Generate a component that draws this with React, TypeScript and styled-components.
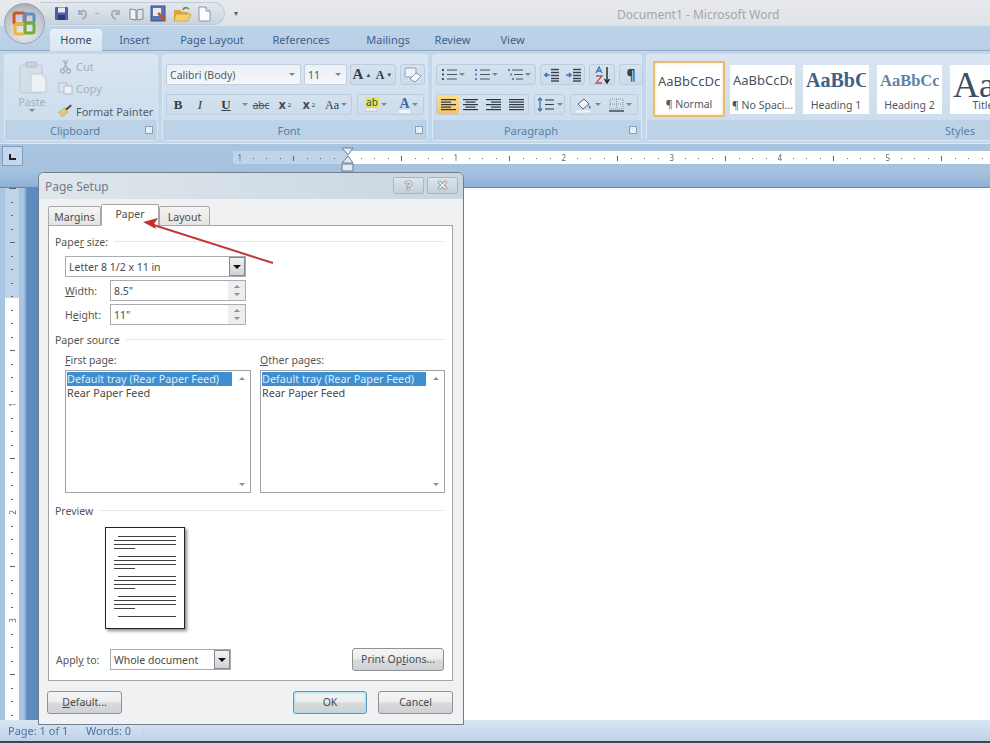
import React from "react";
import styled, { createGlobalStyle, css } from "styled-components";

const GlobalStyle = createGlobalStyle`
  html, body { margin: 0; padding: 0; background: #fff; }
  body { font-family: "Noto Sans", "Open Sans", sans-serif; font-size: 11px; color: #444; }
`;

const Page = styled.div`
  position: relative;
  width: 990px;
  height: 743px;
  overflow: hidden;
  display: flex;
  flex-direction: column;
  filter: blur(0.25px);
`;

/* ---------- title bar ---------- */
const TitleBar = styled.div`
  height: 26px;
  flex: none;
  display: flex;
  align-items: center;
  background: linear-gradient(#e9eaed, #dfe2e6);
`;
const OfficeOrb = styled.div`
  position: absolute;
  left: 4px;
  top: 3px;
  width: 41px;
  height: 41px;
  border-radius: 50%;
  display: flex;
  align-items: center;
  justify-content: center;
  background: radial-gradient(circle at 50% 72%, #eceff1, #b9c0c7 68%, #8b96a0);
  border: 1px solid #98a4b0;
  box-sizing: border-box;
  z-index: 2;
`;
const QuickAccess = styled.div`
  margin-left: 40px;
  width: 185px;
  height: 23px;
  margin-top: 1px;
  box-sizing: border-box;
  padding-left: 14px;
  display: flex;
  align-items: center;
  gap: 6px;
  background: linear-gradient(#e3e8ee, #c8d3de);
  border: 1px solid #c2ccd6;
  border-left: none;
  border-radius: 0 12px 12px 0;
`;
const QatDash = styled.span`
  width: 4px;
  height: 1px;
  margin-right: 4px;
  background: #a3b0bd;
  flex: none;
`;
const QatMore = styled.span`
  margin-left: 9px;
  font-size: 8px;
  color: #56616c;
  line-height: 1;
`;
const WindowTitle = styled.div`
  position: absolute;
  left: 617px;
  top: 6px;
  font-size: 12px;
  color: #a3a6aa;
`;

/* ---------- tabs ---------- */
const TabRow = styled.div`
  height: 25px;
  flex: none;
  box-sizing: border-box;
  padding: 3px 0 0 50px;
  display: flex;
  background: linear-gradient(#bcd3e8, #b8cfe6);
  border-bottom: 1px solid #8fa9c3;
`;
const Tab = styled.div<{ $active?: boolean; $w: number }>`
  width: ${(p) => p.$w}px;
  flex: none;
  text-align: center;
  line-height: 22px;
  color: #3f5f8a;
  ${(p) =>
    p.$active &&
    css`
      background: linear-gradient(#e8eff6, #d9e6f2);
      border-radius: 3px 3px 0 0;
      color: #3a4a5c;
      height: 23px;
    `}
`;

/* ---------- ribbon ---------- */
const Ribbon = styled.div`
  height: 92px;
  flex: none;
  box-sizing: border-box;
  padding: 3px 0 2px 4px;
  display: flex;
  gap: 4px;
  background: #c3d7ea;
  overflow: hidden;
`;
const Group = styled.div<{ $w: number }>`
  width: ${(p) => p.$w}px;
  flex: none;
  display: flex;
  flex-direction: column;
  border: 1px solid #dce7f1;
  border-radius: 3px;
  box-sizing: border-box;
  background: linear-gradient(#d9e5f1, #c9dbec);
`;
const GroupBody = styled.div<{ $pad?: string }>`
  flex: 1;
  min-height: 0;
  padding: ${(p) => p.$pad || "9px 3px 0 3px"};
  display: flex;
`;
const GroupRows = styled.div`
  display: flex;
  flex-direction: column;
  gap: 9px;
`;
const GroupFooter = styled.div`
  height: 20px;
  flex: none;
  display: flex;
  align-items: center;
  background: #bcd2e7;
  color: #5a7ea8;
  padding-right: 4px;
`;
const GroupLabel = styled.div`
  flex: 1;
  text-align: center;
  font-size: 11px;
`;
const Launcher = styled.span`
  width: 6px;
  height: 6px;
  border: 1px solid #8aa0b6;
  background: #e6edf4;
  flex: none;
`;
const PasteColumn = styled.div`
  width: 52px;
  margin-left: -2px;
  display: flex;
  flex-direction: column;
  align-items: center;
  color: #a5afb9;
  font-size: 10.5px;
  margin-top: -3px;
`;
const ClipList = styled.div`
  display: flex;
  flex-direction: column;
  gap: 4.5px;
  margin-top: -7px;
`;
const ClipItem = styled.div<{ $off?: boolean }>`
  height: 18px;
  flex: none;
  display: flex;
  align-items: center;
  gap: 3px;
  white-space: nowrap;
  color: ${(p) => (p.$off ? "#a5afb9" : "#4d5f74")};
`;
const Row = styled.div<{ $gap?: number }>`
  display: flex;
  gap: ${(p) => p.$gap ?? 5}px;
`;
const Combo = styled.div<{ $w: number }>`
  width: ${(p) => p.$w}px;
  height: 21px;
  box-sizing: border-box;
  padding: 0 5px 0 3px;
  display: flex;
  align-items: center;
  justify-content: space-between;
  background: linear-gradient(#eaf0f6, #f4f7fa);
  border: 1px solid #c2d0de;
  border-radius: 2px;
  color: #4d5a68;
  font-size: 10.5px;
`;
const Caret = styled.span`
  width: 0;
  height: 0;
  flex: none;
  border-left: 3px solid transparent;
  border-right: 3px solid transparent;
  border-top: 3px solid #7a8794;
`;
const Cluster = styled.div`
  height: 21px;
  box-sizing: border-box;
  display: flex;
  align-items: stretch;
  background: linear-gradient(#d5e2ef, #cbdcec);
  border: 1px solid #bccddd;
  border-radius: 3px;
`;
const Cell = styled.div<{ $w: number; $on?: boolean }>`
  width: ${(p) => p.$w}px;
  flex: none;
  display: flex;
  align-items: center;
  justify-content: center;
  gap: 2px;
  color: #3d4854;
  font-size: 12px;
  ${(p) =>
    p.$on &&
    css`
      background: linear-gradient(#fbdc95, #f8c262);
      border-radius: 2px;
    `}
`;
const SerifGlyph = styled.span<{ $size?: number; $color?: string; $i?: boolean; $u?: boolean; $b?: boolean }>`
  font-family: "Liberation Serif", serif;
  font-weight: ${(p) => (p.$b === false ? 400 : 700)};
  font-style: ${(p) => (p.$i ? "italic" : "normal")};
  text-decoration: ${(p) => (p.$u ? "underline" : "none")};
  font-size: ${(p) => p.$size ?? 12}px;
  color: ${(p) => p.$color ?? "#333d48"};
  line-height: 1;
`;
const Strike = styled.span`
  font-size: 10px;
  text-decoration: line-through;
  color: #4a5560;
`;
const Sub = styled.sub`
  font-size: 6px;
`;
const Sup = styled.sup`
  font-size: 6px;
`;
const StyleGallery = styled.div`
  display: flex;
  align-items: center;
  margin-left: 1px;
`;
const StyleItem = styled.div<{ $w: number; $active?: boolean; $gap?: number }>`
  width: ${(p) => p.$w}px;
  height: ${(p) => (p.$active ? 56 : 49)}px;
  flex: none;
  margin-right: ${(p) => p.$gap ?? 8}px;
  box-sizing: border-box;
  overflow: hidden;
  display: flex;
  flex-direction: column;
  align-items: center;
  justify-content: space-between;
  padding: 7px 0 2px 0;
  background: #fff;
  white-space: nowrap;
  ${(p) =>
    p.$active &&
    css`
      border: 2px solid #e7bc6a;
      border-radius: 2px;
      box-shadow: inset 0 0 3px #f7dd9e;
      padding: 10px 0 4px 0;
    `}
`;
const StyleSample = styled.div<{ $serif?: boolean; $color?: string; $size?: number }>`
  align-self: stretch;
  margin: 0 3px;
  overflow: hidden;
  font-family: ${(p) => (p.$serif ? '"Liberation Serif", serif' : '"Noto Sans", sans-serif')};
  font-weight: ${(p) => (p.$serif && (p.$size ?? 0) < 24 ? 700 : 400)};
  font-size: ${(p) => p.$size ?? 12}px;
  color: ${(p) => p.$color ?? "#4a535e"};
  line-height: ${(p) => ((p.$size ?? 12) > 24 ? "27px" : "17px")};
`;
const StyleName = styled.div`
  font-size: 10.5px;
  color: #4f5563;
  line-height: 14px;
`;

/* ---------- horizontal ruler ---------- */
const RulerBand = styled.div`
  height: 45px;
  flex: none;
  position: relative;
  box-sizing: border-box;
  padding-top: 7px;
  display: flex;
  align-items: flex-start;
  background: linear-gradient(#a9c4e0 0, #a6c2df 60%, #8fb0d6 97%, #53708f 100%);
  border-top: 1px solid #dce7f1;
`;
const TabStopButton = styled.div`
  position: absolute;
  left: 2px;
  top: 2px;
  width: 21px;
  height: 20px;
  box-sizing: border-box;
  border: 1px solid #7f9dbe;
  background: #c6d7ea;
  display: flex;
  align-items: center;
  justify-content: center;
`;
const RulerCorner = styled.span`
  width: 5px;
  height: 4px;
  margin-top: 1px;
  border-left: 2px solid #222;
  border-bottom: 2px solid #222;
`;
const HStrip = styled.div`
  margin-left: 233px;
  flex: 1;
  height: 13px;
  display: flex;
  overflow: hidden;
  background: linear-gradient(to right, #c0d4e9 115px, #fff 115px);
`;
const HCell = styled.div`
  flex: 0 0 13.5px;
  text-align: center;
  line-height: 13px;
  font-size: 8px;
  color: #5b6670;
`;
const IndentMarker = styled.svg`
  position: absolute;
  left: 341px;
  top: 3px;
`;

/* ---------- main area ---------- */
const Workspace = styled.div`
  flex: 1;
  min-height: 0;
  display: flex;
`;
const VRulerGutter = styled.div`
  width: 38px;
  flex: none;
  display: flex;
  background: linear-gradient(to right, #a9c5e2 0, #a9c5e2 24px, #5d8abf 27px, #5d8abf 100%);
`;
const VRuler = styled.div`
  width: 14px;
  margin-left: 5px;
  overflow: hidden;
  background: linear-gradient(#c0d4e9 110px, #fff 110px);
`;
const VList = styled.div`
  margin-top: -6px;
`;
const VCell = styled.div`
  height: 13.5px;
  display: flex;
  align-items: center;
  justify-content: center;
  font-size: 8px;
  color: #5b6670;
`;
const VNumber = styled.span`
  transform: rotate(-90deg);
`;
const Tick = styled.span<{ $len: number }>`
  width: ${(p) => p.$len}px;
  height: 1px;
  background: #59646e;
`;
const HTick = styled.span<{ $h: number }>`
  display: inline-block;
  width: 1px;
  height: ${(p) => p.$h}px;
  background: #59646e;
  vertical-align: middle;
`;
const DocumentPage = styled.div`
  flex: 1;
  background: #fff;
`;

/* ---------- status bar ---------- */
const StatusBar = styled.div`
  height: 23px;
  flex: none;
  box-sizing: border-box;
  display: flex;
  background: linear-gradient(#d9e6f3, #bdd2e7);
  border-bottom: 2px solid #3d4650;
  color: #54709a;
`;
const StatusItem = styled.div<{ $w: number }>`
  width: ${(p) => p.$w}px;
  flex: none;
  line-height: 21px;
  padding-left: 8px;
  box-sizing: border-box;
  border-right: 1px solid #c6d6e6;
`;

/* ---------- dialog ---------- */
const Dialog = styled.div`
  position: absolute;
  left: 38px;
  top: 172px;
  width: 426px;
  height: 553px;
  box-sizing: border-box;
  background: #f0f1f2;
  border: 1px solid #6f7f8d;
  border-radius: 6px 6px 0 0;
  display: flex;
  flex-direction: column;
  z-index: 3;
`;
const DialogTitle = styled.div`
  height: 26px;
  flex: none;
  box-sizing: border-box;
  padding: 0 5px 0 6px;
  display: flex;
  align-items: center;
  justify-content: space-between;
  background: linear-gradient(to right, #dfe6ec, #c9d6e0);
  border-radius: 5px 5px 0 0;
  font-size: 12px;
  color: #6f7c88;
`;
const TitleButtons = styled.div`
  display: flex;
  gap: 3px;
  margin-top: -2px;
`;
const TitleButton = styled.div`
  width: 31px;
  height: 17px;
  box-sizing: border-box;
  border: 1px solid #a8b6c2;
  background: linear-gradient(#dde5eb, #c4d0da);
  border-radius: 2px;
  display: flex;
  align-items: center;
  justify-content: center;
  font-family: "Liberation Sans", sans-serif;
  font-weight: 700;
  font-size: 13px;
  color: #eef1f4;
  text-shadow: 0 0 1px #4f5a65, 0 0 1px #4f5a65, 0 0 1px #4f5a65;
`;
const DialogBody = styled.div`
  flex: 1;
  display: flex;
  flex-direction: column;
  padding: 6px 10px 0 9px;
`;
const TabStrip = styled.div`
  height: 21px;
  flex: none;
  display: flex;
  align-items: flex-end;
  position: relative;
  z-index: 1;
  margin-bottom: -1px;
`;
const DialogTab = styled.div<{ $active?: boolean; $w: number }>`
  width: ${(p) => p.$w}px;
  flex: none;
  box-sizing: border-box;
  text-align: center;
  border: 1px solid #a5a9ad;
  border-radius: 2px 2px 0 0;
  font-size: 10.5px;
  color: #4d4d4d;
  ${(p) =>
    p.$active
      ? css`
          height: 22px;
          background: #fff;
          border-bottom: 1px solid #fff;
          line-height: 19px;
        `
      : css`
          height: 20px;
          background: linear-gradient(#f4f4f4, #e3e3e3);
          line-height: 21px;
        `}
`;
const TabPanel = styled.div`
  height: 456px;
  flex: none;
  box-sizing: border-box;
  background: #fff;
  border: 1px solid #a0a4a8;
  padding: 8px 8px 0 6px;
  display: flex;
  flex-direction: column;
`;
const SectionHead = styled.div<{ $top?: number }>`
  display: flex;
  align-items: center;
  gap: 6px;
  height: 15px;
  margin-top: ${(p) => p.$top ?? 0}px;
  font-size: 10.5px;
  color: #555;
`;
const SectionRule = styled.span`
  flex: 1;
  height: 1px;
  background: #e4e6e8;
`;
const Access = styled.span`
  text-decoration: underline;
`;
const SelectBox = styled.div<{ $w: number; $h?: number }>`
  width: ${(p) => p.$w}px;
  height: ${(p) => p.$h ?? 21}px;
  flex: none;
  box-sizing: border-box;
  display: flex;
  align-items: center;
  justify-content: space-between;
  border: 1px solid #a9acaf;
  padding-left: 3px;
  font-size: 10.5px;
  color: #4a4a4a;
  background: #fff;
`;
const DropButton = styled.span`
  width: 16px;
  align-self: stretch;
  flex: none;
  box-sizing: border-box;
  border: 1px solid #858a8f;
  background: linear-gradient(#f1f2f4, #cfd2d6);
  display: flex;
  align-items: center;
  justify-content: center;
`;
const BlackCaret = styled.span`
  width: 0;
  height: 0;
  border-left: 4px solid transparent;
  border-right: 4px solid transparent;
  border-top: 4px solid #111;
`;
const PaperBlock = styled.div`
  margin: 7px 0 0 10px;
  display: flex;
  flex-direction: column;
  gap: 3px;
`;
const FieldRow = styled.div`
  display: flex;
  align-items: center;
  font-size: 10.5px;
  color: #555;
`;
const FieldLabel = styled.span<{ $w: number }>`
  width: ${(p) => p.$w}px;
  flex: none;
`;
const Spinner = styled.span`
  width: 17px;
  align-self: stretch;
  flex: none;
  display: flex;
  flex-direction: column;
  align-items: center;
  justify-content: space-evenly;
  background: #eceef0;
`;
const SpinUp = styled.span`
  width: 0;
  height: 0;
  border-left: 3px solid transparent;
  border-right: 3px solid transparent;
  border-bottom: 3px solid #8a9098;
`;
const SpinDown = styled(SpinUp)`
  border-bottom: none;
  border-top: 3px solid #8a9098;
`;
const SourceGrid = styled.div`
  margin: 6px 0 0 10px;
  display: grid;
  grid-template-columns: 186px 185px;
  column-gap: 9px;
`;
const SourceColumn = styled.div`
  display: flex;
  flex-direction: column;
  font-size: 10.5px;
  color: #555;
  gap: 3px;
`;
const ListBox = styled.div`
  height: 123px;
  box-sizing: border-box;
  border: 1px solid #a0a4a8;
  display: flex;
  padding: 1px 0 1px 1px;
  color: #4a4a4a;
  font-size: 10.8px;
`;
const ListItems = styled.div`
  flex: 1;
  padding-right: 1px;
`;
const ListRow = styled.div<{ $sel?: boolean }>`
  height: 14px;
  line-height: 14px;
  white-space: nowrap;
  ${(p) =>
    p.$sel &&
    css`
      background: #3f8fd0;
      color: #dcecf8;
    `}
`;
const ScrollTrack = styled.div`
  width: 17px;
  flex: none;
  display: flex;
  flex-direction: column;
  align-items: center;
  justify-content: space-between;
  padding: 5px 0;
`;
const PreviewSheet = styled.div`
  width: 80px;
  height: 102px;
  margin: 9px 0 0 50px;
  box-sizing: border-box;
  flex: none;
  background: #fff;
  border: 1px solid #222;
  box-shadow: 2px 2px 3px rgba(0, 0, 0, 0.45);
  padding: 8px 8px 0 8px;
  display: flex;
  flex-direction: column;
  gap: 3px;
`;
const PreviewLine = styled.span<{ $kind?: "indent" | "short" }>`
  height: 1px;
  flex: none;
  background: #3f3f3f;
  margin-left: ${(p) => (p.$kind === "indent" ? 4 : 0)}px;
  margin-right: ${(p) => (p.$kind === "short" ? 41 : 0)}px;
  margin-bottom: ${(p) => (p.$kind === "short" ? 4 : 0)}px;
`;
const ApplyRow = styled.div`
  margin: 19px 0 0 1px;
  display: flex;
  align-items: center;
  justify-content: space-between;
  font-size: 10.5px;
  color: #555;
`;
const ApplyLeft = styled.div`
  display: flex;
  align-items: center;
`;
const Button = styled.div<{ $w: number; $primary?: boolean }>`
  width: ${(p) => p.$w}px;
  height: 23px;
  flex: none;
  box-sizing: border-box;
  border: 1px solid ${(p) => (p.$primary ? "#5b9cb4" : "#8e9296")};
  border-radius: 3px;
  background: linear-gradient(#f4f5f6 0, #eceded 48%, #d8dadc 52%, #cfd1d4 100%);
  ${(p) => p.$primary && "box-shadow: inset 0 0 2px 1px #a8dcef;"}
  text-align: center;
  line-height: 21px;
  font-size: 10.5px;
  color: #4a4a4a;
`;
const DialogFooter = styled.div`
  margin: 10px 0 0 -1px;
  display: flex;
  justify-content: space-between;
`;
const FooterRight = styled.div`
  display: flex;
  gap: 11px;
`;
const ArrowOverlay = styled.svg`
  position: absolute;
  left: 0;
  top: 0;
  z-index: 4;
  pointer-events: none;
`;

/* ---------- drawn icons ---------- */
const OrbLogo = () => (
  <svg width="25" height="25" viewBox="0 0 25 25">
    <rect x="2" y="2" width="11" height="11" rx="2" fill="none" stroke="#d2532a" strokeWidth="3" />
    <rect x="12" y="3" width="10" height="9" rx="2" fill="none" stroke="#5f8ecb" strokeWidth="3" />
    <rect x="3" y="13" width="10" height="10" rx="2" fill="none" stroke="#f0b632" strokeWidth="3" />
    <rect x="13" y="12" width="9" height="10" rx="2" fill="none" stroke="#6eae3c" strokeWidth="3" />
  </svg>
);
const SaveIcon = () => (
  <svg width="15" height="15" viewBox="0 0 15 15">
    <rect x="1" y="1" width="13" height="13" rx="1" fill="#4a5fa8" />
    <rect x="4" y="1.5" width="7" height="5" fill="#e6ebf5" />
    <rect x="4" y="9" width="7" height="5" fill="#2e3c78" />
  </svg>
);
const CurveIcon = ({ flip }: { flip?: boolean }) => (
  <svg width="14" height="14" viewBox="0 0 14 14" style={{ transform: flip ? "scaleX(-1)" : undefined }}>
    <path d="M4 3 L4 7 L8 7 M4 7 C6 2 12 3 11 8 C10.5 10 9 11.5 7 12" fill="none" stroke="#a3b0bd" strokeWidth="2" />
  </svg>
);
const BookIcon = () => (
  <svg width="15" height="14" viewBox="0 0 15 14">
    <path d="M1 2 L7 3 L7 13 L1 12 Z" fill="#f2f4f6" stroke="#7d8994" />
    <path d="M8 3 L14 2 L14 12 L8 13 Z" fill="#dfe5ea" stroke="#7d8994" />
  </svg>
);
const PreviewIcon = () => (
  <svg width="17" height="17" viewBox="0 0 17 17">
    <rect x="1" y="1" width="14" height="15" fill="#5f74ae" stroke="#3f4f86" />
    <rect x="3" y="3" width="8" height="8" fill="#e7ebf3" />
    <path d="M8 8 L15 15" stroke="#c0572f" strokeWidth="2.5" />
  </svg>
);
const FolderIcon = () => (
  <svg width="19" height="16" viewBox="0 0 19 16">
    <path d="M1 4 H7 L9 6 H15 V14 H1 Z" fill="#dfa53c" />
    <path d="M3 8 H18 L15 15 H1 Z" fill="#f4cf6d" stroke="#c4923a" strokeWidth="0.6" />
    <path d="M10 4 C11 1 14 1 16 3" fill="none" stroke="#5f9c3c" strokeWidth="1.6" />
  </svg>
);
const NewDocIcon = () => (
  <svg width="13" height="16" viewBox="0 0 13 16">
    <path d="M1 1 H8 L12 5 V15 H1 Z" fill="#fbfcfd" stroke="#8b96a1" />
    <path d="M8 1 V5 H12" fill="#dfe6ed" stroke="#8b96a1" />
  </svg>
);
const ClipboardIcon = () => (
  <svg width="30" height="34" viewBox="0 0 30 34">
    <rect x="3" y="4" width="22" height="28" rx="2" fill="#d5dee7" stroke="#bcc8d4" />
    <rect x="9" y="1" width="10" height="5" rx="1" fill="#c9d3dd" stroke="#aebbc7" />
    <path d="M14 13 H24 L29 18 V31 H14 Z" fill="#eef2f6" stroke="#c4cfd9" />
  </svg>
);
const ScissorsIcon = () => (
  <svg width="15" height="15" viewBox="0 0 14 15">
    <path d="M9 1 L5 10 M5 1 L9 10" stroke="#a5afb9" strokeWidth="1.4" />
    <circle cx="4" cy="12" r="2" fill="none" stroke="#a5afb9" strokeWidth="1.3" />
    <circle cx="10" cy="12" r="2" fill="none" stroke="#a5afb9" strokeWidth="1.3" />
  </svg>
);
const CopyIcon = () => (
  <svg width="15" height="13" viewBox="0 0 15 13">
    <rect x="1" y="1" width="8" height="9" fill="#dfe6ed" stroke="#b1bcc7" />
    <rect x="6" y="4" width="8" height="8" fill="#eef2f6" stroke="#b1bcc7" />
  </svg>
);
const BrushIcon = () => (
  <svg width="15" height="14" viewBox="0 0 17 15">
    <path d="M1 9 L7 4 L11 9 L5 14 Z" fill="#e9cc6e" stroke="#a78f43" strokeWidth="0.6" />
    <path d="M9 6 L15 1" stroke="#57504a" strokeWidth="2.4" />
  </svg>
);
const EraserIcon = () => (
  <svg width="18" height="16" viewBox="0 0 18 16">
    <rect x="1" y="1" width="11" height="9" rx="1" fill="#eef2f6" stroke="#8ba0b6" />
    <path d="M6 12 L12 6 L17 9 L11 15 Z" fill="#fafafa" stroke="#6f8296" strokeWidth="0.8" />
  </svg>
);
const ListIcon = ({ kind }: { kind: "bullet" | "number" | "multi" }) => (
  <svg width="15" height="13" viewBox="0 0 15 13">
    {[2, 6.5, 11].map((y, i) => (
      <g key={y}>
        <rect x={kind === "multi" ? i * 2 : 0} y={y - 1} width="2" height="2" fill={kind === "bullet" ? "#4a5560" : "#5a86b8"} />
        <path d={`M${kind === "multi" ? 4 + i * 2 : 5} ${y} H15`} stroke="#4a5560" strokeWidth="1" />
      </g>
    ))}
  </svg>
);
const IndentIcon = ({ dir }: { dir: "in" | "out" }) => (
  <svg width="16" height="14" viewBox="0 0 16 14">
    {[1.5, 4.5, 7.5, 10.5, 13].map((y) => (
      <path key={y} d={`M7 ${y} H15`} stroke="#39434d" strokeWidth="1.4" />
    ))}
    <path d={dir === "out" ? "M6 7 H1 M3 5 L1 7 L3 9" : "M0 7 H5 M3 5 L5 7 L3 9"} fill="none" stroke="#3f74b0" strokeWidth="1.6" />
  </svg>
);
const AlignIcon = ({ mode }: { mode: "left" | "center" | "right" | "full" }) => {
  const rows = [15, 10, 15, 10, 15];
  return (
    <svg width="15" height="12" viewBox="0 0 15 12">
      {rows.map((w, i) => {
        const width = mode === "full" ? 15 : w;
        const x = mode === "left" || mode === "full" ? 0 : mode === "right" ? 15 - width : (15 - width) / 2;
        return <rect key={i} x={x} y={i * 2.5} width={width} height="1.2" fill="#2e3640" />;
      })}
    </svg>
  );
};
const SortIcon = () => (
  <svg width="17" height="18" viewBox="0 0 17 18">
    <path d="M2 7 L5 1 L8 7 M3 5 H7" fill="none" stroke="#3f74b0" strokeWidth="1.3" />
    <path d="M2 10 H8 L2 17 H8" fill="none" stroke="#c0504d" strokeWidth="1.3" />
    <path d="M13 1 V16 M10.5 13 L13 17 L15.5 13" fill="none" stroke="#222" strokeWidth="1.4" />
  </svg>
);
const LineSpacingIcon = () => (
  <svg width="18" height="15" viewBox="0 0 18 15">
    <path d="M3 1 V14 M1 3.5 L3 1 L5 3.5 M1 11.5 L3 14 L5 11.5" fill="none" stroke="#3f74b0" strokeWidth="1.3" />
    {[3, 7.5, 12].map((y) => (
      <path key={y} d={`M8 ${y} H17`} stroke="#39434d" strokeWidth="1.1" />
    ))}
  </svg>
);
const ShadingIcon = () => (
  <svg width="18" height="16" viewBox="0 0 18 16">
    <path d="M3 7 L9 2 L14 7 L8 12 Z" fill="#f1f4f7" stroke="#56616c" />
    <path d="M14 8 C16 10 16 11 15 12 C14 11 13.5 10 14 8 Z" fill="#3f74b0" />
    <rect x="1" y="13.5" width="14" height="2" fill="#f4f7fa" />
  </svg>
);
const BordersIcon = () => (
  <svg width="15" height="14" viewBox="0 0 15 14">
    <rect x="1" y="1" width="13" height="10" fill="none" stroke="#8a96a2" strokeDasharray="1 1" />
    <path d="M7.5 1 V11 M1 6 H14" stroke="#8a96a2" strokeDasharray="1 1" />
    <path d="M0 13 H15" stroke="#39434d" strokeWidth="1.4" />
  </svg>
);
const HighlightIcon = () => (
  <svg width="12" height="5" viewBox="0 0 12 5">
    <rect x="0" y="1" width="12" height="3" fill="#f5f7f9" stroke="#9aa7b3" strokeWidth="0.5" />
  </svg>
);

const Underbar = styled.span<{ $color: string }>`
  display: block;
  height: 3px;
  background: ${(p) => p.$color};
  margin-top: -1px;
`;
const Stack = styled.span`
  display: flex;
  flex-direction: column;
  align-items: stretch;
  text-align: center;
  line-height: 11px;
`;
const AbText = styled.span`
  font-size: 10px;
  background: #e4e66a;
  color: #3b4a2a;
  line-height: 10px;
  padding: 0 1px;
`;
const Pilcrow = styled.span`
  font-weight: 700;
  font-size: 14px;
  color: #39434d;
  line-height: 1;
`;

const tabs: [string, number][] = [
  ["Insert", 65],
  ["Page Layout", 90],
  ["References", 88],
  ["Mailings", 86],
  ["Review", 43],
  ["View", 77],
];

const paperLines: ("indent" | "short" | undefined)[] = [
  "indent", undefined, undefined, "short",
  "indent", undefined, undefined, "short",
  "indent", undefined, undefined, "short",
  "indent", undefined, undefined, "short",
  "indent",
];

// eighth-inch marks, index 0 is the -1 inch position
const hMarks = Array.from({ length: 56 }, (_, i) => i);
const vMarks = Array.from({ length: 41 }, (_, i) => i);

const HMark = ({ i }: { i: number }) => {
  if (i === 8) return null;
  if (i % 8 === 0) return <>{Math.abs(i / 8 - 1)}</>;
  if (i % 4 === 0) return <HTick $h={5} />;
  return <HTick $h={1} />;
};

const VMark = ({ i }: { i: number }) => {
  if (i % 8 === 0 && i > 8) return <VNumber>{i / 8 - 1}</VNumber>;
  if (i % 8 === 0) return <Tick $len={i === 0 ? 7 : 2} />;
  if (i % 4 === 0) return <Tick $len={5} />;
  return <Tick $len={2} />;
};

const PaperSource = ({ accessKey, rest }: { accessKey: string; rest: string }) => (
  <SourceColumn>
    <span>
      <Access>{accessKey}</Access>
      {rest}
    </span>
    <ListBox>
      <ListItems>
        <ListRow $sel>Default tray (Rear Paper Feed)</ListRow>
        <ListRow>Rear Paper Feed</ListRow>
      </ListItems>
      <ScrollTrack>
        <SpinUp />
        <SpinDown />
      </ScrollTrack>
    </ListBox>
  </SourceColumn>
);

export default function App() {
  return (
    <Page>
      <GlobalStyle />
      <OfficeOrb>
        <OrbLogo />
      </OfficeOrb>
      <TitleBar>
        <QuickAccess>
          <SaveIcon />
          <CurveIcon />
          <QatDash />
          <CurveIcon flip />
          <BookIcon />
          <PreviewIcon />
          <FolderIcon />
          <NewDocIcon />
        </QuickAccess>
        <QatMore>▾</QatMore>
      </TitleBar>
      <WindowTitle>Document1 - Microsoft Word</WindowTitle>

      <TabRow>
        <Tab $active $w={52}>Home</Tab>
        {tabs.map(([name, w]) => (
          <Tab key={name} $w={w}>{name}</Tab>
        ))}
      </TabRow>

      <Ribbon>
        <Group $w={154}>
          <GroupBody>
            <PasteColumn>
              <ClipboardIcon />
              <span>Paste</span>
              <Caret />
            </PasteColumn>
            <ClipList>
              <ClipItem $off><ScissorsIcon />Cut</ClipItem>
              <ClipItem $off><CopyIcon />Copy</ClipItem>
              <ClipItem><BrushIcon />Format Painter</ClipItem>
            </ClipList>
          </GroupBody>
          <GroupFooter>
            <GroupLabel>Clipboard</GroupLabel>
            <Launcher />
          </GroupFooter>
        </Group>

        <Group $w={266}>
          <GroupBody>
            <GroupRows>
              <Row $gap={3}>
                <Combo $w={135}>Calibri (Body)<Caret /></Combo>
                <Combo $w={43}>11<Caret /></Combo>
                <Row $gap={4}>
                  <Cluster>
                    <Cell $w={22}><SerifGlyph $size={15}>A</SerifGlyph><Sup>▲</Sup></Cell>
                    <Cell $w={22}><SerifGlyph $size={12}>A</SerifGlyph><Sup>▼</Sup></Cell>
                  </Cluster>
                  <Cluster>
                    <Cell $w={23}><EraserIcon /></Cell>
                  </Cluster>
                </Row>
              </Row>
              <Row $gap={5}>
                <Cluster>
                  <Cell $w={22}><SerifGlyph $size={13}>B</SerifGlyph></Cell>
                  <Cell $w={22}><SerifGlyph $size={13} $i $b={false}>I</SerifGlyph></Cell>
                  <Cell $w={30}><SerifGlyph $size={13} $u>U</SerifGlyph></Cell>
                  <Cell $w={8}><Caret /></Cell>
                  <Cell $w={24}><Strike>abc</Strike></Cell>
                  <Cell $w={24}><strong>x</strong><Sub>2</Sub></Cell>
                  <Cell $w={24}><strong>x</strong><Sup>2</Sup></Cell>
                  <Cell $w={30}><SerifGlyph $size={12} $b={false}>Aa</SerifGlyph><Caret /></Cell>
                </Cluster>
                <Cluster>
                  <Cell $w={36}>
                    <Stack>
                      <AbText>ab</AbText>
                      <HighlightIcon />
                    </Stack>
                    <Caret />
                  </Cell>
                  <Cell $w={29}>
                    <Stack>
                      <SerifGlyph $size={14} $color="#3f6aa8">A</SerifGlyph>
                      <Underbar $color="#f5f7f9" />
                    </Stack>
                    <Caret />
                  </Cell>
                </Cluster>
              </Row>
            </GroupRows>
          </GroupBody>
          <GroupFooter>
            <GroupLabel>Font</GroupLabel>
            <Launcher />
          </GroupFooter>
        </Group>

        <Group $w={210}>
          <GroupBody>
            <GroupRows>
              <Row $gap={4}>
                <Cluster>
                  <Cell $w={33}><ListIcon kind="bullet" /><Caret /></Cell>
                  <Cell $w={33}><ListIcon kind="number" /><Caret /></Cell>
                  <Cell $w={32}><ListIcon kind="multi" /><Caret /></Cell>
                </Cluster>
                <Cluster>
                  <Cell $w={22}><IndentIcon dir="out" /></Cell>
                  <Cell $w={21}><IndentIcon dir="in" /></Cell>
                </Cluster>
                <Cluster>
                  <Cell $w={24}><SortIcon /></Cell>
                </Cluster>
                <Cluster>
                  <Cell $w={22}><Pilcrow>¶</Pilcrow></Cell>
                </Cluster>
              </Row>
              <Row $gap={5}>
                <Cluster>
                  <Cell $w={22} $on><AlignIcon mode="left" /></Cell>
                  <Cell $w={23}><AlignIcon mode="center" /></Cell>
                  <Cell $w={23}><AlignIcon mode="right" /></Cell>
                  <Cell $w={23}><AlignIcon mode="full" /></Cell>
                </Cluster>
                <Cluster>
                  <Cell $w={29}><LineSpacingIcon /><Caret /></Cell>
                </Cluster>
                <Cluster>
                  <Cell $w={33}><ShadingIcon /><Caret /></Cell>
                  <Cell $w={33}><BordersIcon /><Caret /></Cell>
                </Cluster>
              </Row>
            </GroupRows>
          </GroupBody>
          <GroupFooter>
            <GroupLabel>Paragraph</GroupLabel>
            <Launcher />
          </GroupFooter>
        </Group>

        <Group $w={640}>
          <GroupBody $pad="3px 0 0 5px">
            <StyleGallery>
              <StyleItem $w={72} $active $gap={5}>
                <StyleSample $size={13}>AaBbCcDc</StyleSample>
                <StyleName>¶ Normal</StyleName>
              </StyleItem>
              <StyleItem $w={65}>
                <StyleSample $size={13}>AaBbCcDc</StyleSample>
                <StyleName>¶ No Spaci...</StyleName>
              </StyleItem>
              <StyleItem $w={66}>
                <StyleSample $serif $size={20} $color="#3c6187">AaBbCc</StyleSample>
                <StyleName>Heading 1</StyleName>
              </StyleItem>
              <StyleItem $w={65}>
                <StyleSample $serif $size={16.5} $color="#5d84a8">AaBbCc</StyleSample>
                <StyleName>Heading 2</StyleName>
              </StyleItem>
              <StyleItem $w={66}>
                <StyleSample $serif $size={36} $color="#3a4d60">Aa</StyleSample>
                <StyleName>Title</StyleName>
              </StyleItem>
            </StyleGallery>
          </GroupBody>
          <GroupFooter>
            <GroupLabel>Styles</GroupLabel>
            <Launcher />
          </GroupFooter>
        </Group>
      </Ribbon>

      <RulerBand>
        <TabStopButton>
          <RulerCorner />
        </TabStopButton>
        <HStrip>
          {hMarks.map((i) => (
            <HCell key={i}>
              <HMark i={i} />
            </HCell>
          ))}
        </HStrip>
        <IndentMarker width="14" height="25" viewBox="0 0 14 25">
          <path d="M1 1 H12 L7 8 Z" fill="#e2ebf4" stroke="#6a7d90" />
          <path d="M7 9 L12 16 H1 Z" fill="#e2ebf4" stroke="#6a7d90" />
          <rect x="1" y="17" width="11" height="7" fill="#e2ebf4" stroke="#6a7d90" />
        </IndentMarker>
      </RulerBand>

      <Workspace>
        <VRulerGutter>
          <VRuler>
            <VList>
              {vMarks.map((i) => (
                <VCell key={i}>
                  <VMark i={i} />
                </VCell>
              ))}
            </VList>
          </VRuler>
        </VRulerGutter>
        <DocumentPage />
      </Workspace>

      <StatusBar>
        <StatusItem $w={78}>Page: 1 of 1</StatusItem>
        <StatusItem $w={66}>Words: 0</StatusItem>
      </StatusBar>

      <Dialog>
        <DialogTitle>
          Page Setup
          <TitleButtons>
            <TitleButton>?</TitleButton>
            <TitleButton>✕</TitleButton>
          </TitleButtons>
        </DialogTitle>
        <DialogBody>
          <TabStrip>
            <DialogTab $w={53}>Margins</DialogTab>
            <DialogTab $active $w={58}>Paper</DialogTab>
            <DialogTab $w={51}>Layout</DialogTab>
          </TabStrip>
          <TabPanel>
            <SectionHead>
              <span>Pape<Access>r</Access> size:</span>
              <SectionRule />
            </SectionHead>
            <PaperBlock>
              <SelectBox $w={181}>
                Letter 8 1/2 x 11 in
                <DropButton><BlackCaret /></DropButton>
              </SelectBox>
              <FieldRow>
                <FieldLabel $w={45}><Access>W</Access>idth:</FieldLabel>
                <SelectBox $w={136}>
                  8.5"
                  <Spinner><SpinUp /><SpinDown /></Spinner>
                </SelectBox>
              </FieldRow>
              <FieldRow>
                <FieldLabel $w={45}>H<Access>e</Access>ight:</FieldLabel>
                <SelectBox $w={136}>
                  11"
                  <Spinner><SpinUp /><SpinDown /></Spinner>
                </SelectBox>
              </FieldRow>
            </PaperBlock>
            <SectionHead $top={7}>
              <span>Paper source</span>
              <SectionRule />
            </SectionHead>
            <SourceGrid>
              <PaperSource accessKey="F" rest="irst page:" />
              <PaperSource accessKey="O" rest="ther pages:" />
            </SourceGrid>
            <SectionHead $top={10}>
              <span>Preview</span>
              <SectionRule />
            </SectionHead>
            <PreviewSheet>
              {paperLines.map((kind, i) => (
                <PreviewLine key={i} $kind={kind} />
              ))}
            </PreviewSheet>
            <ApplyRow>
              <ApplyLeft>
                <FieldLabel $w={54}>Appl<Access>y</Access> to:</FieldLabel>
                <SelectBox $w={121}>
                  Whole document
                  <DropButton><BlackCaret /></DropButton>
                </SelectBox>
              </ApplyLeft>
              <Button $w={92}>Print Op<Access>t</Access>ions...</Button>
            </ApplyRow>
          </TabPanel>
          <DialogFooter>
            <Button $w={75}><Access>D</Access>efault...</Button>
            <FooterRight>
              <Button $w={74} $primary>OK</Button>
              <Button $w={75}>Cancel</Button>
            </FooterRight>
          </DialogFooter>
        </DialogBody>
      </Dialog>

      <ArrowOverlay width="990" height="743" viewBox="0 0 990 743">
        <path d="M273 263 L152 224.5" stroke="#c0383a" strokeWidth="2" fill="none" />
        <path d="M143 222 L158 218 L154 224 L156 229 Z" fill="#c4302c" />
      </ArrowOverlay>
    </Page>
  );
}
